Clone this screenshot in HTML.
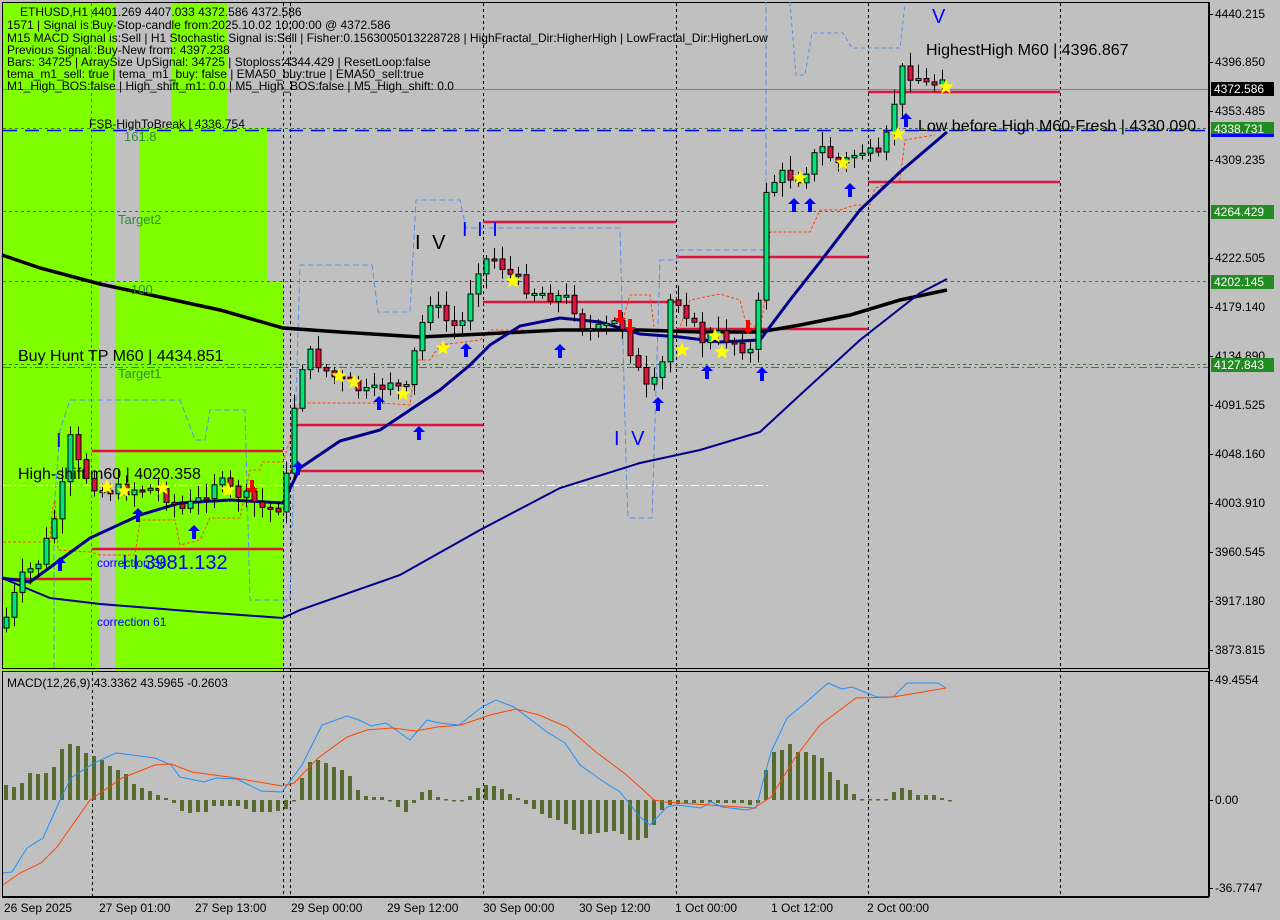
<!DOCTYPE html>
<html><head><meta charset="utf-8">
<style>
html,body{margin:0;padding:0;background:#c0c0c0;}
body{width:1280px;height:920px;overflow:hidden;position:relative;font-family:"Liberation Sans",sans-serif;}
svg{position:absolute;left:0;top:0;}
</style></head>
<body>
<svg id="s" width="1280" height="920" xmlns="http://www.w3.org/2000/svg" font-family="Liberation Sans, sans-serif">
<rect x="0" y="0" width="1280" height="920" fill="#c0c0c0"/>
<g fill="#80ff00">
<rect x="2" y="2" width="113" height="280"/>
<rect x="2" y="282" width="97" height="386"/>
<rect x="115" y="282" width="168" height="386"/>
<rect x="171" y="2" width="56" height="126"/>
<rect x="139" y="128" width="128" height="154"/>
<rect x="2" y="669" width="97" height="3"/>
<rect x="115" y="669" width="168" height="3"/>
</g>
<rect x="2.5" y="2.5" width="1206" height="666" fill="none" stroke="#000"/>
<rect x="2.5" y="671.5" width="1206" height="225" fill="none" stroke="#000"/>
<g stroke="#000" stroke-dasharray="3,3" stroke-width="1">
<line x1="283.5" y1="3" x2="283.5" y2="896"/>
<line x1="290.5" y1="3" x2="290.5" y2="896"/>
<line x1="483.5" y1="3" x2="483.5" y2="896"/>
<line x1="676.5" y1="3" x2="676.5" y2="896"/>
<line x1="868.5" y1="3" x2="868.5" y2="896"/>
<line x1="1060.5" y1="3" x2="1060.5" y2="896"/>
<line x1="92.5" y1="672" x2="92.5" y2="896"/>
</g>
<line x1="91.5" y1="3" x2="91.5" y2="668" stroke="#a040a0" stroke-dasharray="3,3"/>
<g stroke="#2e7d32" stroke-dasharray="3,3">
<line x1="3" y1="128.5" x2="1208" y2="128.5"/>
<line x1="3" y1="211.5" x2="1208" y2="211.5"/>
<line x1="3" y1="281.5" x2="1208" y2="281.5"/>
<line x1="3" y1="364.5" x2="1208" y2="364.5"/>
</g>
<line x1="3" y1="367.5" x2="1208" y2="367.5" stroke="#e03020" stroke-dasharray="8,3,2,3"/>
<line x1="3" y1="130.5" x2="1208" y2="130.5" stroke="#0000ff" stroke-dasharray="14,8" stroke-width="1.5"/>
<line x1="3" y1="89.5" x2="1208" y2="89.5" stroke="#808080"/>
<line x1="3" y1="485.5" x2="770" y2="485.5" stroke="#fff" stroke-dasharray="8,3,2,3"/>
<g stroke="#dc143c" stroke-width="2.5">
<line x1="92" y1="451" x2="283" y2="451"/>
<line x1="92" y1="549" x2="283" y2="549"/>
<line x1="3" y1="579" x2="92" y2="579"/>
<line x1="290" y1="425" x2="483" y2="425"/>
<line x1="290" y1="471" x2="483" y2="471"/>
<line x1="483" y1="222" x2="676" y2="222"/>
<line x1="483" y1="302" x2="676" y2="302"/>
<line x1="676" y1="257" x2="868" y2="257"/>
<line x1="676" y1="329" x2="868" y2="329"/>
<line x1="868" y1="92" x2="1060" y2="92"/>
<line x1="868" y1="182" x2="1060" y2="182"/>
</g>
<polyline fill="none" stroke="#5a8fe8" stroke-dasharray="6,3" stroke-width="1" points="54,668 54,510 60,430 70,400 180,400 195,440 205,440 210,410 245,410 250,600 283,600 290,600 300,265 372,265 378,312 410,312 416,200 460,200 466,228 483,228 486,228 620,228 626,460 628,518 652,518 660,260 676,260 680,250 766,250 766,2"/>
<polyline fill="none" stroke="#5a8fe8" stroke-dasharray="4,3" stroke-width="1" points="790,2 796,75 805,75 812,33 843,33 852,48 900,48 905,4"/>
<polyline fill="none" stroke="#ff4500" stroke-dasharray="3,2" stroke-width="1" points="3,542 50,542 52,510 55,500 58,550 90,552 100,555 135,555 140,520 175,520 180,545 200,540 210,518 240,518 250,470 260,470 262,462 283,462 290,440 300,403 380,403 410,405 416,360 430,360 440,345 480,340 490,330 620,330 630,295 650,295 655,335 676,338 690,300 720,294 740,300 745,320 760,330 765,300 770,232 810,232 820,210 840,210 855,205 870,205 875,188 900,180 905,140 935,135"/>
<polyline fill="none" stroke="#000" stroke-width="3.5" points="2,255 40,268 100,284 160,297 220,310 283,328 340,332 420,337 483,334 560,330 640,330 700,332 760,332 800,325 850,315 900,300 947,290"/>
<polyline fill="none" stroke="#00008b" stroke-width="3" points="2,578 30,582 60,560 90,538 140,515 180,503 230,500 283,503 300,468 340,441 380,430 410,410 440,390 470,365 490,345 520,326 560,318 600,322 640,334 680,337 720,342 760,340 790,300 820,262 860,210 900,172 947,132"/>
<polyline fill="none" stroke="#00008b" stroke-width="2" points="2,578 50,598 100,604 200,612 283,618 300,610 400,575 480,530 560,488 640,463 700,450 760,432 800,395 860,340 920,293 947,279"/>
<g id="candles"></g>
<g id="marks"></g>
<g font-size="12" fill="#000">
<text x="20" y="16">ETHUSD,H1  4401.269 4407.033 4372.586 4372.586</text>
<text x="7" y="29">1571 | Signal is Buy-Stop-candle from:2025.10.02 10:00:00 @ 4372.586</text>
<text x="7" y="42">M15 MACD Signal is:Sell | H1 Stochastic Signal is:Sell | Fisher:0.1563005013228728 | HighFractal_Dir:HigherHigh | LowFractal_Dir:HigherLow</text>
<text x="7" y="54">Previous Signal :Buy-New from: 4397.238</text>
<text x="7" y="66">Bars: 34725 | ArraySize UpSignal: 34725 | Stoploss:4344.429 | ResetLoop:false</text>
<text x="7" y="78">tema_m1_sell: true | tema_m1_buy: false | EMA50_buy:true | EMA50_sell:true</text>
<text x="7" y="90">M1_High_BOS:false | High_shift_m1: 0.0 | M5_High_BOS:false | M5_High_shift: 0.0</text>
<text x="89" y="128">FSB-HighToBreak | 4336.754</text>
</g>
<g font-size="13" fill="#2e8b3a">
<text x="124" y="141">161.8</text>
<text x="118" y="224">Target2</text>
<text x="131" y="294">100</text>
<text x="118" y="378">Target1</text>
</g>
<g font-size="16" fill="#000">
<text x="18" y="361">Buy Hunt TP M60 | 4434.851</text>
<text x="18" y="479">High-shift m60 | 4020.358</text>
<text x="926" y="55">HighestHigh    M60 | 4396.867</text>
<text x="918" y="131">Low before High    M60-Fresh | 4330.090</text>
<text x="415" y="249" font-size="20" letter-spacing="3">I V</text>
</g>
<g fill="#0000ff">
<text x="97" y="567" font-size="12">correction 38</text>
<text x="97" y="626" font-size="12">correction 61</text>
<text x="122" y="569" font-size="20">I I 3981.132</text>
<text x="462" y="236" font-size="20" letter-spacing="2">I I I</text>
<text x="614" y="445" font-size="20" letter-spacing="3">I V</text>
<text x="56" y="447" font-size="20">I</text>
<text x="932" y="23" font-size="20">V</text>
</g>
<g id="hist" fill="#556b2f"></g>
<polyline fill="none" stroke="#1e90ff" stroke-width="1" points="3,873 12,872 27,848 43,838 61,798 71,778 94,763 116,753 155,758 171,765 180,777 204,782 216,778 237,779 261,791 282,792 302,765 322,725 347,716 359,720 371,726 386,723 410,740 427,720 439,723 459,725 482,707 496,700 514,707 547,732 565,743 580,765 604,782 620,792 640,817 650,825 667,807 677,805 701,808 711,802 722,807 746,810 756,808 771,752 787,718 803,705 828,683 842,689 852,687 877,697 893,697 907,683 938,683 946,688"/>
<polyline fill="none" stroke="#ff4500" stroke-width="1" points="3,885 20,873 41,863 57,847 90,800 122,778 155,765 171,764 192,772 229,777 282,786 294,783 318,758 347,737 367,730 392,728 416,731 437,727 461,725 490,715 516,709 539,715 567,727 596,752 624,773 640,787 654,800 664,802 709,805 754,808 771,797 795,758 820,725 856,698 893,697 946,688"/>
<text x="7" y="687" font-size="12">MACD(12,26,9) 43.3362 43.5965 -0.2603</text>
<g font-size="12" fill="#000" id="axis"></g>
<g stroke="#000"><line x1="1209.5" y1="2" x2="1209.5" y2="897"/><line x1="2" y1="897.5" x2="1209" y2="897.5"/></g>
<g font-size="12" fill="#000">
<text x="4" y="912">26 Sep 2025</text>
<text x="99" y="912">27 Sep 01:00</text>
<text x="195" y="912">27 Sep 13:00</text>
<text x="291" y="912">29 Sep 00:00</text>
<text x="387" y="912">29 Sep 12:00</text>
<text x="483" y="912">30 Sep 00:00</text>
<text x="579" y="912">30 Sep 12:00</text>
<text x="675" y="912">1 Oct 00:00</text>
<text x="771" y="912">1 Oct 12:00</text>
<text x="867" y="912">2 Oct 00:00</text>
</g>
</svg>
<script>
(function(){
var NS="http://www.w3.org/2000/svg";
function el(t,a,p){var e=document.createElementNS(NS,t);for(var k in a)e.setAttribute(k,a[k]);(p||document.getElementById('s')).appendChild(e);return e;}
var ax=document.getElementById('axis');
[["4440.215",14],["4396.850",62],["4353.485",111],["4309.235",160],["4222.505",258],["4179.140",307],["4134.890",356],["4091.525",405],["4048.160",454],["4003.910",503],["3960.545",552],["3917.180",601],["3873.815",650],["49.4554",680],["0.00",800],["-36.7747",888]].forEach(function(a){
 el('line',{x1:1209,y1:a[1]+.5,x2:1213,y2:a[1]+.5,stroke:'#000'},ax);
 var t=el('text',{x:1215,y:a[1]+4},ax);t.textContent=a[0];});
[["4372.586",89,"#000"],["4338.731",129,"#228b22"],["4264.429",212,"#228b22"],["4202.145",282,"#228b22"],["4127.843",365,"#228b22"]].forEach(function(a){
 el('rect',{x:1211,y:a[1]-7,width:63,height:14,fill:a[2]},ax);
 var t=el('text',{x:1214,y:a[1]+4,fill:'#fff'},ax);t.textContent=a[0];});
el('rect',{x:1211,y:134,width:63,height:3,fill:'#0000ff'},ax);
var P=[[5,620],[20,580],[40,560],[60,500],[70,440],[80,470],[100,490],[120,490],[140,488],[160,490],[180,510],[200,500],[215,480],[230,490],[250,500],[265,510],[283,505],[298,370],[310,355],[330,375],[350,385],[370,395],[390,380],[405,395],[418,335],[430,300],[445,320],[460,330],[475,270],[485,260],[495,258],[510,275],[530,290],[550,295],[570,300],[585,330],[600,330],[620,320],[630,350],[645,390],[660,380],[670,300],[680,300],[700,340],[720,335],[740,345],[755,355],[765,190],[780,175],[800,178],[820,147],[840,165],[860,150],[880,160],[890,123],[900,70],[915,75],[930,88],[945,70]];
function f(x){for(var i=1;i<P.length;i++){if(x<=P[i][0]){var a=P[i-1],b=P[i];return a[1]+(b[1]-a[1])*(x-a[0])/(b[0]-a[0]);}}return P[P.length-1][1];}
var cg=document.getElementById('candles');var seed=7;function rnd(){seed=(seed*9301+49297)%233280;return seed/233280;}
var prev=f(2);
for(var x=6;x<=946;x+=8){var c=f(x)+(rnd()-0.5)*14;var o=prev;var tp=Math.min(o,c),bt=Math.max(o,c);if(bt-tp<2){bt=tp+2;}
 el('line',{x1:x+.5,y1:tp-3-rnd()*12,x2:x+.5,y2:bt+3+rnd()*12,stroke:'#000'},cg);
 el('rect',{x:x-2,y:tp,width:5,height:bt-tp,fill:(c<o?'#00e676':'#dc143c'),stroke:'#000','stroke-width':1},cg);prev=c;}
var mg=document.getElementById('marks');
function star(cx,cy){var p=[];for(var i=0;i<10;i++){var R=i%2?3.5:8,a=-Math.PI/2+i*Math.PI/5;p.push((cx+R*Math.cos(a)).toFixed(1)+','+(cy+R*Math.sin(a)).toFixed(1));}el('polygon',{points:p.join(' '),fill:'#ffff00'},mg);}
[[107,487],[124,491],[163,488],[228,490],[339,376],[354,382],[403,394],[443,348],[513,281],[682,350],[715,336],[722,352],[843,163],[898,134],[946,87],[800,178]].forEach(function(a){star(a[0],a[1]);});
function up(cx,cy){el('path',{d:'M'+cx+' '+(cy-7)+' L'+(cx+6)+' '+(cy-1)+' L'+(cx+2)+' '+(cy-1)+' L'+(cx+2)+' '+(cy+7)+' L'+(cx-2)+' '+(cy+7)+' L'+(cx-2)+' '+(cy-1)+' L'+(cx-6)+' '+(cy-1)+'Z',fill:'#0000ff'},mg);}
function dn(cx,cy){el('path',{d:'M'+cx+' '+(cy+7)+' L'+(cx+6)+' '+(cy+1)+' L'+(cx+2)+' '+(cy+1)+' L'+(cx+2)+' '+(cy-7)+' L'+(cx-2)+' '+(cy-7)+' L'+(cx-2)+' '+(cy+1)+' L'+(cx-6)+' '+(cy+1)+'Z',fill:'#ff0000'},mg);}
[[60,564],[138,515],[194,532],[298,468],[379,403],[419,433],[466,350],[560,351],[658,404],[707,372],[762,374],[794,205],[810,205],[850,190],[906,120]].forEach(function(a){up(a[0],a[1]);});
[[252,487],[620,317],[630,326],[748,327]].forEach(function(a){dn(a[0],a[1]);});
var hg=document.getElementById('hist');
var H=[[2,15],[10,13],[18,17],[26,27],[34,26],[42,27],[50,33],[58,51],[66,56],[74,54],[82,47],[90,44],[98,40],[106,34],[114,30],[122,26],[130,16],[138,12],[146,9],[154,5],[162,2],[170,-3],[178,-11],[186,-13],[194,-12],[202,-12],[210,-6],[218,-6],[226,-6],[234,-6],[242,-9],[250,-12],[258,-12],[266,-12],[274,-11],[282,-9],[290,0],[298,22],[306,38],[314,40],[322,37],[330,33],[338,30],[346,24],[354,10],[362,4],[370,3],[378,3],[386,-1],[394,-7],[402,-12],[410,-3],[418,8],[426,10],[434,3],[442,1],[450,0],[458,0],[466,4],[474,12],[482,15],[490,14],[498,11],[506,6],[514,2],[522,-4],[530,-9],[538,-14],[546,-18],[554,-20],[562,-24],[570,-30],[578,-34],[586,-34],[594,-33],[602,-32],[610,-31],[618,-34],[626,-40],[634,-40],[642,-38],[650,-25],[658,-10],[666,-5],[674,-4],[682,-3],[690,-3],[698,-3],[706,-2],[714,-3],[722,-3],[730,-3],[738,-3],[746,-5],[754,-3],[762,30],[770,48],[778,50],[786,56],[794,48],[802,48],[810,45],[818,42],[826,28],[834,20],[842,16],[850,6],[858,1],[866,1],[874,1],[882,1],[890,8],[898,12],[906,10],[914,5],[922,5],[930,5],[938,2],[946,-1]];
H.forEach(function(a){var h=a[1];el('rect',{x:a[0]+2,y:h>0?800-h:800,width:4,height:Math.max(Math.abs(h),1.5)},hg);});
})();
</script>
</body></html>
